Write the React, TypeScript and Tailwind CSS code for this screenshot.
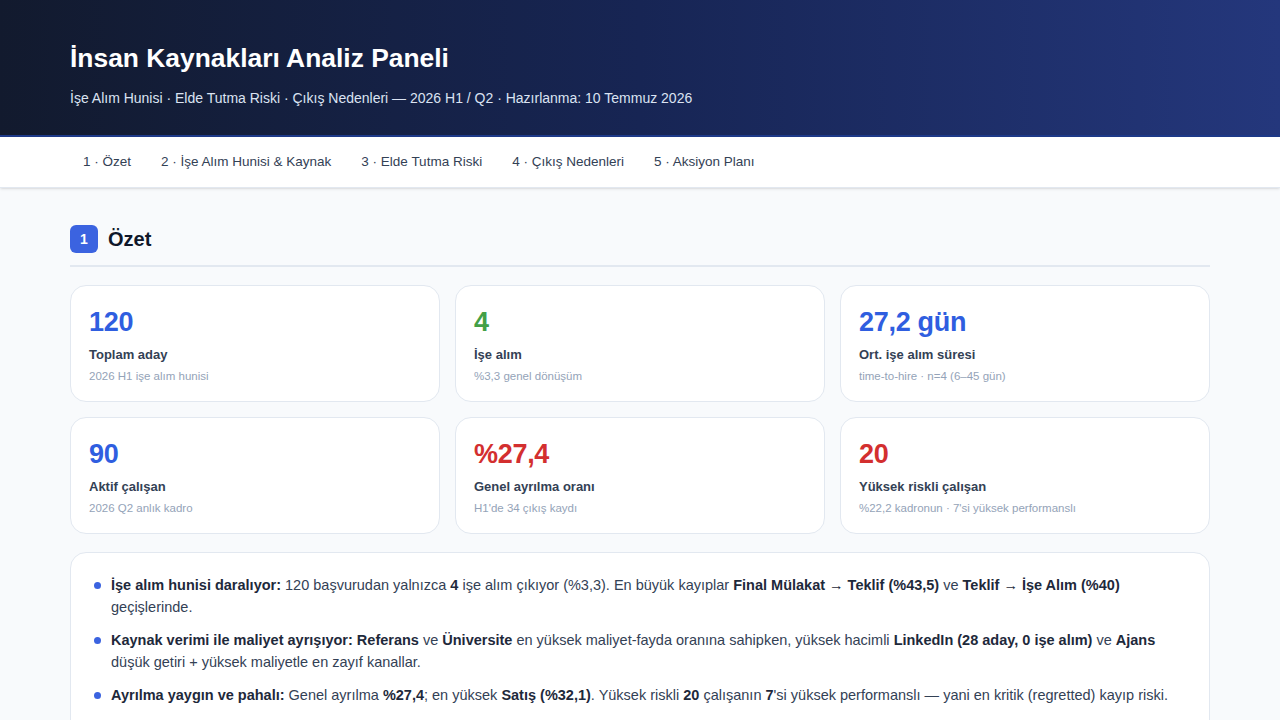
import React from "react";

const FONT = { fontFamily: "'Liberation Sans', Arial, sans-serif" };

const NAV = ["1 · Özet", "2 · İşe Alım Hunisi & Kaynak", "3 · Elde Tutma Riski", "4 · Çıkış Nedenleri", "5 · Aksiyon Planı"];

interface IKpi {
    value: string;
    label: string;
    sub: string;
    color: string;
}

const KPIS: IKpi[] = [
    { value: "120", label: "Toplam aday", sub: "2026 H1 işe alım hunisi", color: "text-[#2f5ee0]" },
    { value: "4", label: "İşe alım", sub: "%3,3 genel dönüşüm", color: "text-[#43a047]" },
    { value: "27,2 gün", label: "Ort. işe alım süresi", sub: "time-to-hire · n=4 (6–45 gün)", color: "text-[#2f5ee0]" },
    { value: "90", label: "Aktif çalışan", sub: "2026 Q2 anlık kadro", color: "text-[#2f5ee0]" },
    { value: "%27,4", label: "Genel ayrılma oranı", sub: "H1'de 34 çıkış kaydı", color: "text-[#d32f2f]" },
    { value: "20", label: "Yüksek riskli çalışan", sub: "%22,2 kadronun · 7'si yüksek performanslı", color: "text-[#d32f2f]" },
];

const B = ({ children }: { children: React.ReactNode }) => (
    <b className="font-bold text-[#1e293b]">{children}</b>
);

const KpiCard = ({ kpi }: { kpi: IKpi }) => (
    <div className="bg-white border border-[#e2e8f0] rounded-2xl px-[18px] pt-[19px] h-[117px]">
        <div className={`text-[27px] leading-[34px] font-bold tracking-[-0.3px] ${kpi.color}`}>{kpi.value}</div>
        <div className="mt-[7px] text-[13px] leading-[18px] font-bold text-[#334155]">{kpi.label}</div>
        <div className="mt-[5px] text-[11.5px] leading-[14px] text-[#94a3b8]">{kpi.sub}</div>
    </div>
);

const Bullet = ({ children }: { children: React.ReactNode }) => (
    <li className="flex gap-[10px]">
        <span className="mt-[8px] w-[7px] h-[7px] rounded-full bg-[#3b63e0] shrink-0" />
        <div>{children}</div>
    </li>
);

export default function App() {
    return (
        <div className="min-h-screen bg-[#f8fafc]" style={FONT}>
            <header className="h-[137px] bg-gradient-to-r from-[#121a2e] via-[#172554] to-[#24377c] border-b-2 border-[#1e3a8a]">
                <div className="max-w-[1140px] mx-auto pt-[41px]">
                    <h1 className="text-[26.4px] leading-[34px] font-bold text-white">
                        İnsan Kaynakları Analiz Paneli
                    </h1>
                    <p className="mt-[13px] text-[14px] leading-[20px] text-[#dbe3f2]">
                        İşe Alım Hunisi · Elde Tutma Riski · Çıkış Nedenleri — 2026 H1 / Q2 · Hazırlanma: 10 Temmuz 2026
                    </p>
                </div>
            </header>

            <nav className="h-[51px] bg-white border-b border-[#e2e8f0] shadow-sm">
                <div className="max-w-[1140px] mx-auto flex gap-[4px] h-full items-center">
                    {NAV.map((n) => (
                        <a key={n} className="px-[13px] text-[13.5px] text-[#334155]">
                            {n}
                        </a>
                    ))}
                </div>
            </nav>

            <main className="max-w-[1140px] mx-auto pt-[36px]">
                <div className="flex items-center gap-[10px] pb-[11px] border-b-2 border-[#e2e8f0]">
                    <span className="w-[28px] h-[28px] rounded-md bg-[#3b63e0] text-white text-[14px] font-bold flex items-center justify-center">
                        1
                    </span>
                    <h2 className="text-[20px] font-bold text-[#0f172a]">Özet</h2>
                </div>

                <div className="grid grid-cols-3 gap-[15px] mt-[18px]">
                    {KPIS.map((k) => (
                        <KpiCard key={k.label} kpi={k} />
                    ))}
                </div>

                <div className="mt-[18px] bg-white border border-[#e2e8f0] rounded-2xl pl-[23px] pr-[24px] pt-[21px] pb-[20px]">
                    <ul className="flex flex-col gap-[11px] text-[14.5px] leading-[22px] text-[#334155]">
                        <Bullet>
                            <B>İşe alım hunisi daralıyor:</B> 120 başvurudan yalnızca <B>4</B> işe alım çıkıyor (%3,3). En büyük kayıplar{" "}
                            <B>Final Mülakat → Teklif (%43,5)</B> ve <B>Teklif → İşe Alım (%40)</B> geçişlerinde.
                        </Bullet>
                        <Bullet>
                            <B>Kaynak verimi ile maliyet ayrışıyor:</B> <B>Referans</B> ve <B>Üniversite</B> en yüksek maliyet-fayda oranına sahipken, yüksek hacimli{" "}
                            <B>LinkedIn (28 aday, 0 işe alım)</B> ve <B>Ajans</B> düşük getiri + yüksek maliyetle en zayıf kanallar.
                        </Bullet>
                        <Bullet>
                            <B>Ayrılma yaygın ve pahalı:</B> Genel ayrılma <B>%27,4</B>; en yüksek <B>Satış (%32,1)</B>. Yüksek riskli <B>20</B> çalışanın <B>7</B>'si yüksek performanslı — yani en kritik (regretted) kayıp riski.
                        </Bullet>
                        <Bullet>
                            <B>Aksiyon önceliği:</B> Teklif aşamasında kabul oranını artırmak ve yüksek performanslı riskli çalışanlar için elde tutma görüşmeleri planlamak.
                        </Bullet>
                    </ul>
                </div>
            </main>
        </div>
    );
}
